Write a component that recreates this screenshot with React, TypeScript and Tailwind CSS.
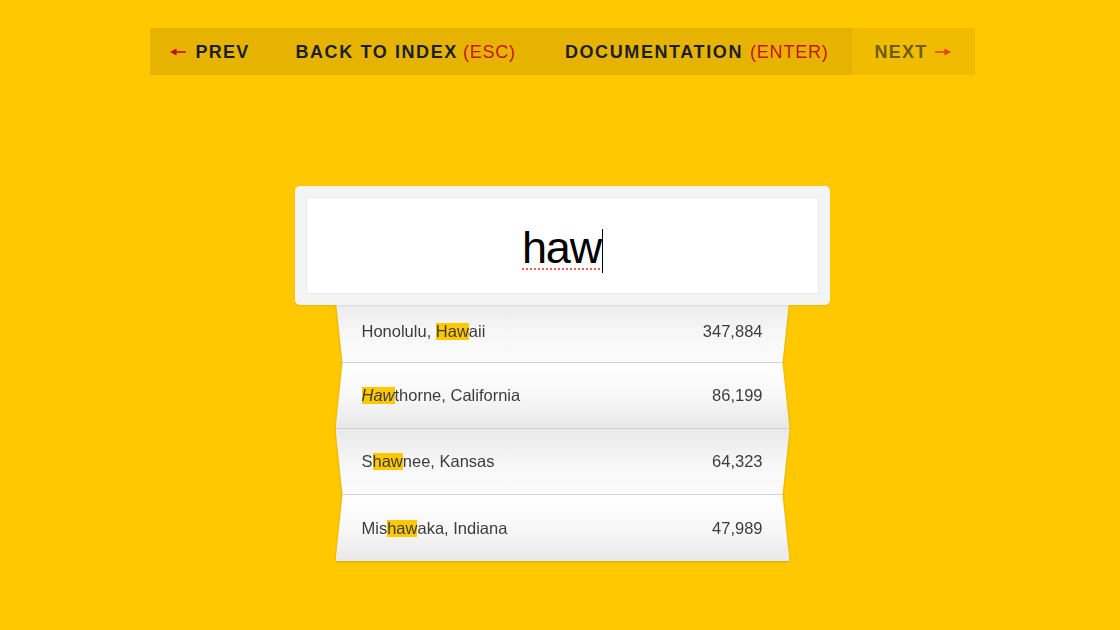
import React from "react";

const rows = [
  { before: "Honolulu, ", hit: "Haw", after: "aii", pop: "347,884", italic: false },
  { before: "", hit: "Haw", after: "thorne, California", pop: "86,199", italic: true },
  { before: "S", hit: "haw", after: "nee, Kansas", pop: "64,323", italic: false },
  { before: "Mis", hit: "haw", after: "aka, Indiana", pop: "47,989", italic: false },
];

function Arrow({ left = false, color }: { left?: boolean; color: string }) {
  return (
    <svg width="16" height="10" viewBox="0 0 16 10" className={left ? "rotate-180" : ""}>
      <path d="M0 5H13" stroke={color} strokeWidth="1.6" />
      <path d="M9.5 1.5L16 5L9.5 8.5Z" fill={color} />
    </svg>
  );
}

function NavItem({ children, className = "" }: any) {
  return <div className={"flex items-center pt-[2px] whitespace-nowrap " + className}>{children}</div>;
}

export default function App() {
  return (
    <div className="min-h-[630px] w-full bg-[#FFC800] font-['Liberation_Sans',Arial,sans-serif] pt-[28px] pl-[5px] flex flex-col items-center">
      <nav className="flex h-[47px] bg-[#E6B400] text-[18px] font-bold tracking-[1.6px] uppercase text-[#1c1e2a]">
        <NavItem className="pl-[20px] pr-[24px]">
          <span className="mr-[10px] -mt-[1px]">
            <Arrow left color="#c40d0d" />
          </span>
          <span className="tracking-[1.2px]">PREV</span>
        </NavItem>
        <NavItem className="pl-[22px] pr-[26px]">
          BACK TO INDEX
          <span className="ml-[5px] font-normal tracking-[0.8px] text-[#c8141a]">(ESC)</span>
        </NavItem>
        <NavItem className="pl-[23px] pr-[23px]">
          DOCUMENTATION
          <span className="ml-[7px] font-normal tracking-[0.8px] text-[#c8141a]">(ENTER)</span>
        </NavItem>
        <NavItem className="bg-[#F0BC00] text-[#6e5c0c] pl-[23px] pr-[24px]">
          <span className="tracking-[1.2px]">NEXT</span>
          <span className="ml-[8px] -mt-[1px]">
            <Arrow color="#e0441a" />
          </span>
        </NavItem>
      </nav>

      <div className="mt-[111px] w-[535px] relative z-10 rounded-[5px] bg-[#f4f4f4] p-[11px] shadow-[0_1px_2px_rgba(0,0,0,0.08)]">
        <div className="h-[97px] bg-white border border-[#ebebeb] flex items-center justify-center pt-[4px]">
          <span className="text-[45px] tracking-[-1.2px] text-black underline decoration-dotted decoration-[#f35a5a] decoration-2 underline-offset-[6px]">
            haw
          </span>
          <span className="inline-block w-px h-[44px] bg-black ml-[1px] mt-[6px]" />
        </div>
      </div>

      <div className="-mt-[8px] w-[454px] drop-shadow-[0_1px_1px_rgba(0,0,0,0.18)]">
        {rows.map((r, i) => {
          const odd = i % 2 === 0;
          return (
            <div
              key={i}
              className={
                "h-[66px] flex items-center justify-between pl-[26px] pr-[27px] text-[16.5px] text-[#3c3c3c] " +
                (i < rows.length - 1 ? "border-b border-[#d3d2cc] " : "") +
                (odd
                  ? "bg-[linear-gradient(to_bottom,#e9e9e9,#f7f7f7_55%,#fbfbfb)] [clip-path:polygon(0_0,100%_0,calc(100%_-_7px)_100%,7px_100%)]"
                  : "bg-[linear-gradient(to_bottom,#ffffff,#f8f8f8_50%,#e8e8e8)] [clip-path:polygon(7px_0,calc(100%_-_7px)_0,100%_100%,0_100%)]") +
                (i === 0 ? " pt-[4px]" : "")
              }
            >
              <span>
                {r.before}
                <span className={"inline-block leading-[17px] bg-[#FFC800] " + (r.italic ? "italic" : "")}>{r.hit}</span>
                {r.after}
              </span>
              <span>{r.pop}</span>
            </div>
          );
        })}
      </div>
    </div>
  );
}
